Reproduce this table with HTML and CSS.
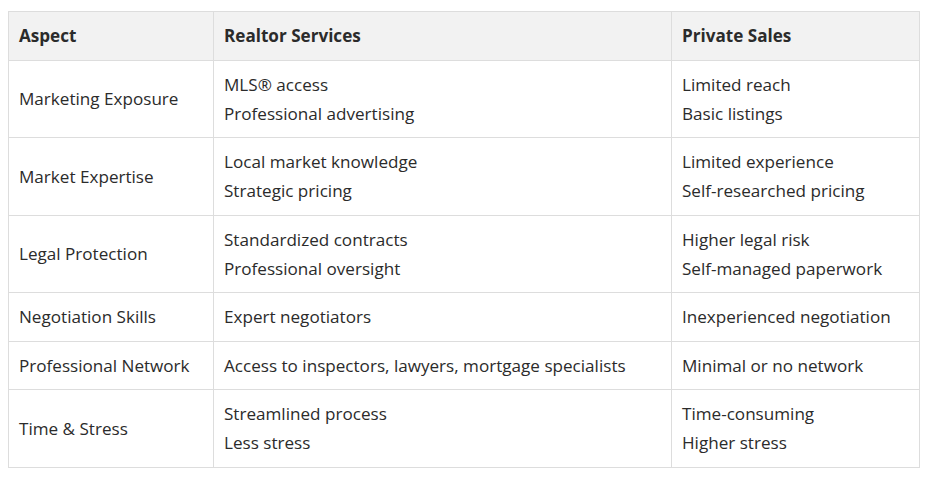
FILE: index.html
```html
<!DOCTYPE html>
<html>
<head>
<meta charset="utf-8">
<link rel="stylesheet" href="styles.css">
</head>
<body>
<div class="wrap">
<table class="cmp">
  <colgroup>
    <col class="c1"><col class="c2"><col class="c3">
  </colgroup>
  <thead>
    <tr><th>Aspect</th><th>Realtor Services</th><th>Private Sales</th></tr>
  </thead>
  <tbody>
    <tr><td>Marketing Exposure</td><td>MLS® access<br>Professional advertising</td><td>Limited reach<br>Basic listings</td></tr>
    <tr><td>Market Expertise</td><td>Local market knowledge<br>Strategic pricing</td><td>Limited experience<br>Self-researched pricing</td></tr>
    <tr><td>Legal Protection</td><td>Standardized contracts<br>Professional oversight</td><td>Higher legal risk<br>Self-managed paperwork</td></tr>
    <tr><td>Negotiation Skills</td><td>Expert negotiators</td><td>Inexperienced negotiation</td></tr>
    <tr><td>Professional Network</td><td>Access to inspectors, lawyers, mortgage specialists</td><td>Minimal or no network</td></tr>
    <tr><td>Time &amp; Stress</td><td>Streamlined process<br>Less stress</td><td>Time-consuming<br>Higher stress</td></tr>
  </tbody>
</table>
</div>
</body>
</html>
```
FILE: styles.css
```css
html, body { margin: 0; padding: 0; background: #fff; }
.wrap { padding: 11px 12px 0 8px; }
.cmp {
  border-collapse: collapse;
  table-layout: fixed;
  width: 911px;
  font-family: "Segoe UI", "Open Sans", sans-serif;
  font-size: 17.1px;
  line-height: 29px;
  color: #2b2b2b;
}
.c1 { width: 205px; }
.c2 { width: 458px; }
.c3 { width: 248px; }
.cmp th, .cmp td {
  border: 1px solid #ddd;
  padding: 9.25px 10px;
  text-align: left;
  vertical-align: middle;
}
.cmp th { background: #f2f2f2; font-weight: 700; }
```
